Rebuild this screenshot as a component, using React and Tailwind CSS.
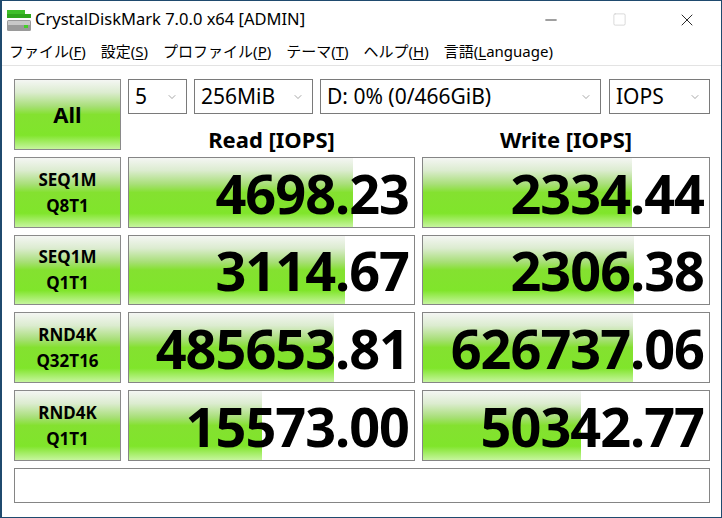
import React from 'react';
import { ChevronDown, Minus, Square, X } from 'lucide-react';

const font = { fontFamily: '"Noto Sans", "Noto Sans CJK JP", sans-serif' };

const rows = [
  { a: 'SEQ1M', b: 'Q8T1', read: '4698.23', rw: 224, write: '2334.44', ww: 209 },
  { a: 'SEQ1M', b: 'Q1T1', read: '3114.67', rw: 216, write: '2306.38', ww: 211 },
  { a: 'RND4K', b: 'Q32T16', read: '485653.81', rw: 205, write: '626737.06', ww: 210 },
  { a: 'RND4K', b: 'Q1T1', read: '15573.00', rw: 133, write: '50342.77', ww: 158 },
];

const menu = [
  ['ファイル(', 'F', ')'],
  ['設定(', 'S', ')'],
  ['プロファイル(', 'P', ')'],
  ['テーマ(', 'T', ')'],
  ['ヘルプ(', 'H', ')'],
  ['言語(', 'L', 'anguage)'],
];

const green = 'bg-[linear-gradient(to_bottom,#f4f6f3_0%,#dcecd0_18%,#a8df78_38%,#84e130_50%,#80e52b_80%,#c6f59e_100%)]';

function Combo({ w, label }) {
  return (
    <div className={`${w} h-[35px] bg-white border border-[#7a7a7a] flex items-center justify-between pl-[6px] pr-[8px]`}>
      <span className="text-[21px] text-black leading-none">{label}</span>
      <ChevronDown size={12} strokeWidth={1.3} className="text-[#777]" />
    </div>
  );
}

function Meter({ value, width }) {
  return (
    <div className="relative h-full bg-white border border-[#858585] flex items-center justify-end pr-[5px] overflow-hidden">
      <div className={`absolute left-0 top-0 bottom-0 ${green}`} style={{ width }} />
      <span className="relative font-bold text-[54px] tracking-[-1px] leading-none text-black">{value}</span>
    </div>
  );
}

function AppIcon() {
  return (
    <svg width="26" height="24" viewBox="0 0 26 24">
      <rect x="2" y="2" width="18" height="4" fill="#3fbf2a" />
      <rect x="2" y="6" width="24" height="4" fill="#2fa51d" />
      <rect x="2" y="12" width="24" height="11" rx="1.5" fill="#9a9a9a" />
      <rect x="3" y="13" width="22" height="4" fill="#c8c8c8" />
      <rect x="19" y="17" width="4" height="3" fill="#44d028" />
    </svg>
  );
}

export default function App() {
  return (
    <div style={font} className="w-[722px] h-[518px] bg-white border border-[#1f4a6e] border-l-2 flex flex-col overflow-hidden">
      <div className="h-[37px] flex items-center shrink-0">
        <div className="pl-[3px] pr-[4px] flex items-center"><AppIcon /></div>
        <span className="text-[16.5px] text-black">CrystalDiskMark 7.0.0 x64 [ADMIN]</span>
        <div className="ml-auto flex items-center h-full">
          <div className="w-[68px] flex justify-center"><Minus size={18} strokeWidth={1} className="text-black" /></div>
          <div className="w-[68px] flex justify-center"><Square size={15} strokeWidth={1} className="text-[#c4c4c4]" /></div>
          <div className="w-[68px] flex justify-center"><X size={20} strokeWidth={1} className="text-black" /></div>
        </div>
      </div>
      <div className="h-[28px] flex items-center gap-[15px] pl-[7px] text-[15px] text-black border-b border-[#e3e3e3] shrink-0">
        {menu.map((m, i) => (
          <span key={i}>{m[0]}<span className="underline underline-offset-2">{m[1]}</span>{m[2]}</span>
        ))}
      </div>
      <div className="flex-1 px-[12px] pt-[13px] grid grid-cols-[107px_287px_288px] grid-rows-[71px_71px_70px_71px_71px_35px] gap-[7px] content-start">
        <div className={`border border-[#8a8a8a] ${green} flex items-center justify-center`}>
          <span className="font-bold text-[22px] text-black">All</span>
        </div>
        <div className="col-span-2 flex flex-col">
          <div className="flex gap-[7px]">
            <Combo w="w-[59px]" label="5" />
            <Combo w="w-[119px]" label="256MiB" />
            <Combo w="w-[281px]" label="D: 0% (0/466GiB)" />
            <div className="w-[1px] -ml-[7px]" />
            <Combo w="w-[101px]" label="IOPS" />
          </div>
          <div className="flex-1 grid grid-cols-[287px_288px] gap-[7px] pt-[9px]">
            <div className="flex items-center justify-center font-bold text-[22px] text-black">Read [IOPS]</div>
            <div className="flex items-center justify-center font-bold text-[22px] text-black">Write [IOPS]</div>
          </div>
        </div>
        {rows.map((r, i) => (
          <React.Fragment key={i}>
            <div className={`border border-[#8a8a8a] ${green} flex flex-col items-center justify-center font-bold text-[17px] leading-[26px] text-black`}>
              <span>{r.a}</span>
              <span>{r.b}</span>
            </div>
            <Meter value={r.read} width={r.rw} />
            <Meter value={r.write} width={r.ww} />
          </React.Fragment>
        ))}
        <div className="col-span-3 border border-[#858585] bg-white" />
      </div>
    </div>
  );
}
